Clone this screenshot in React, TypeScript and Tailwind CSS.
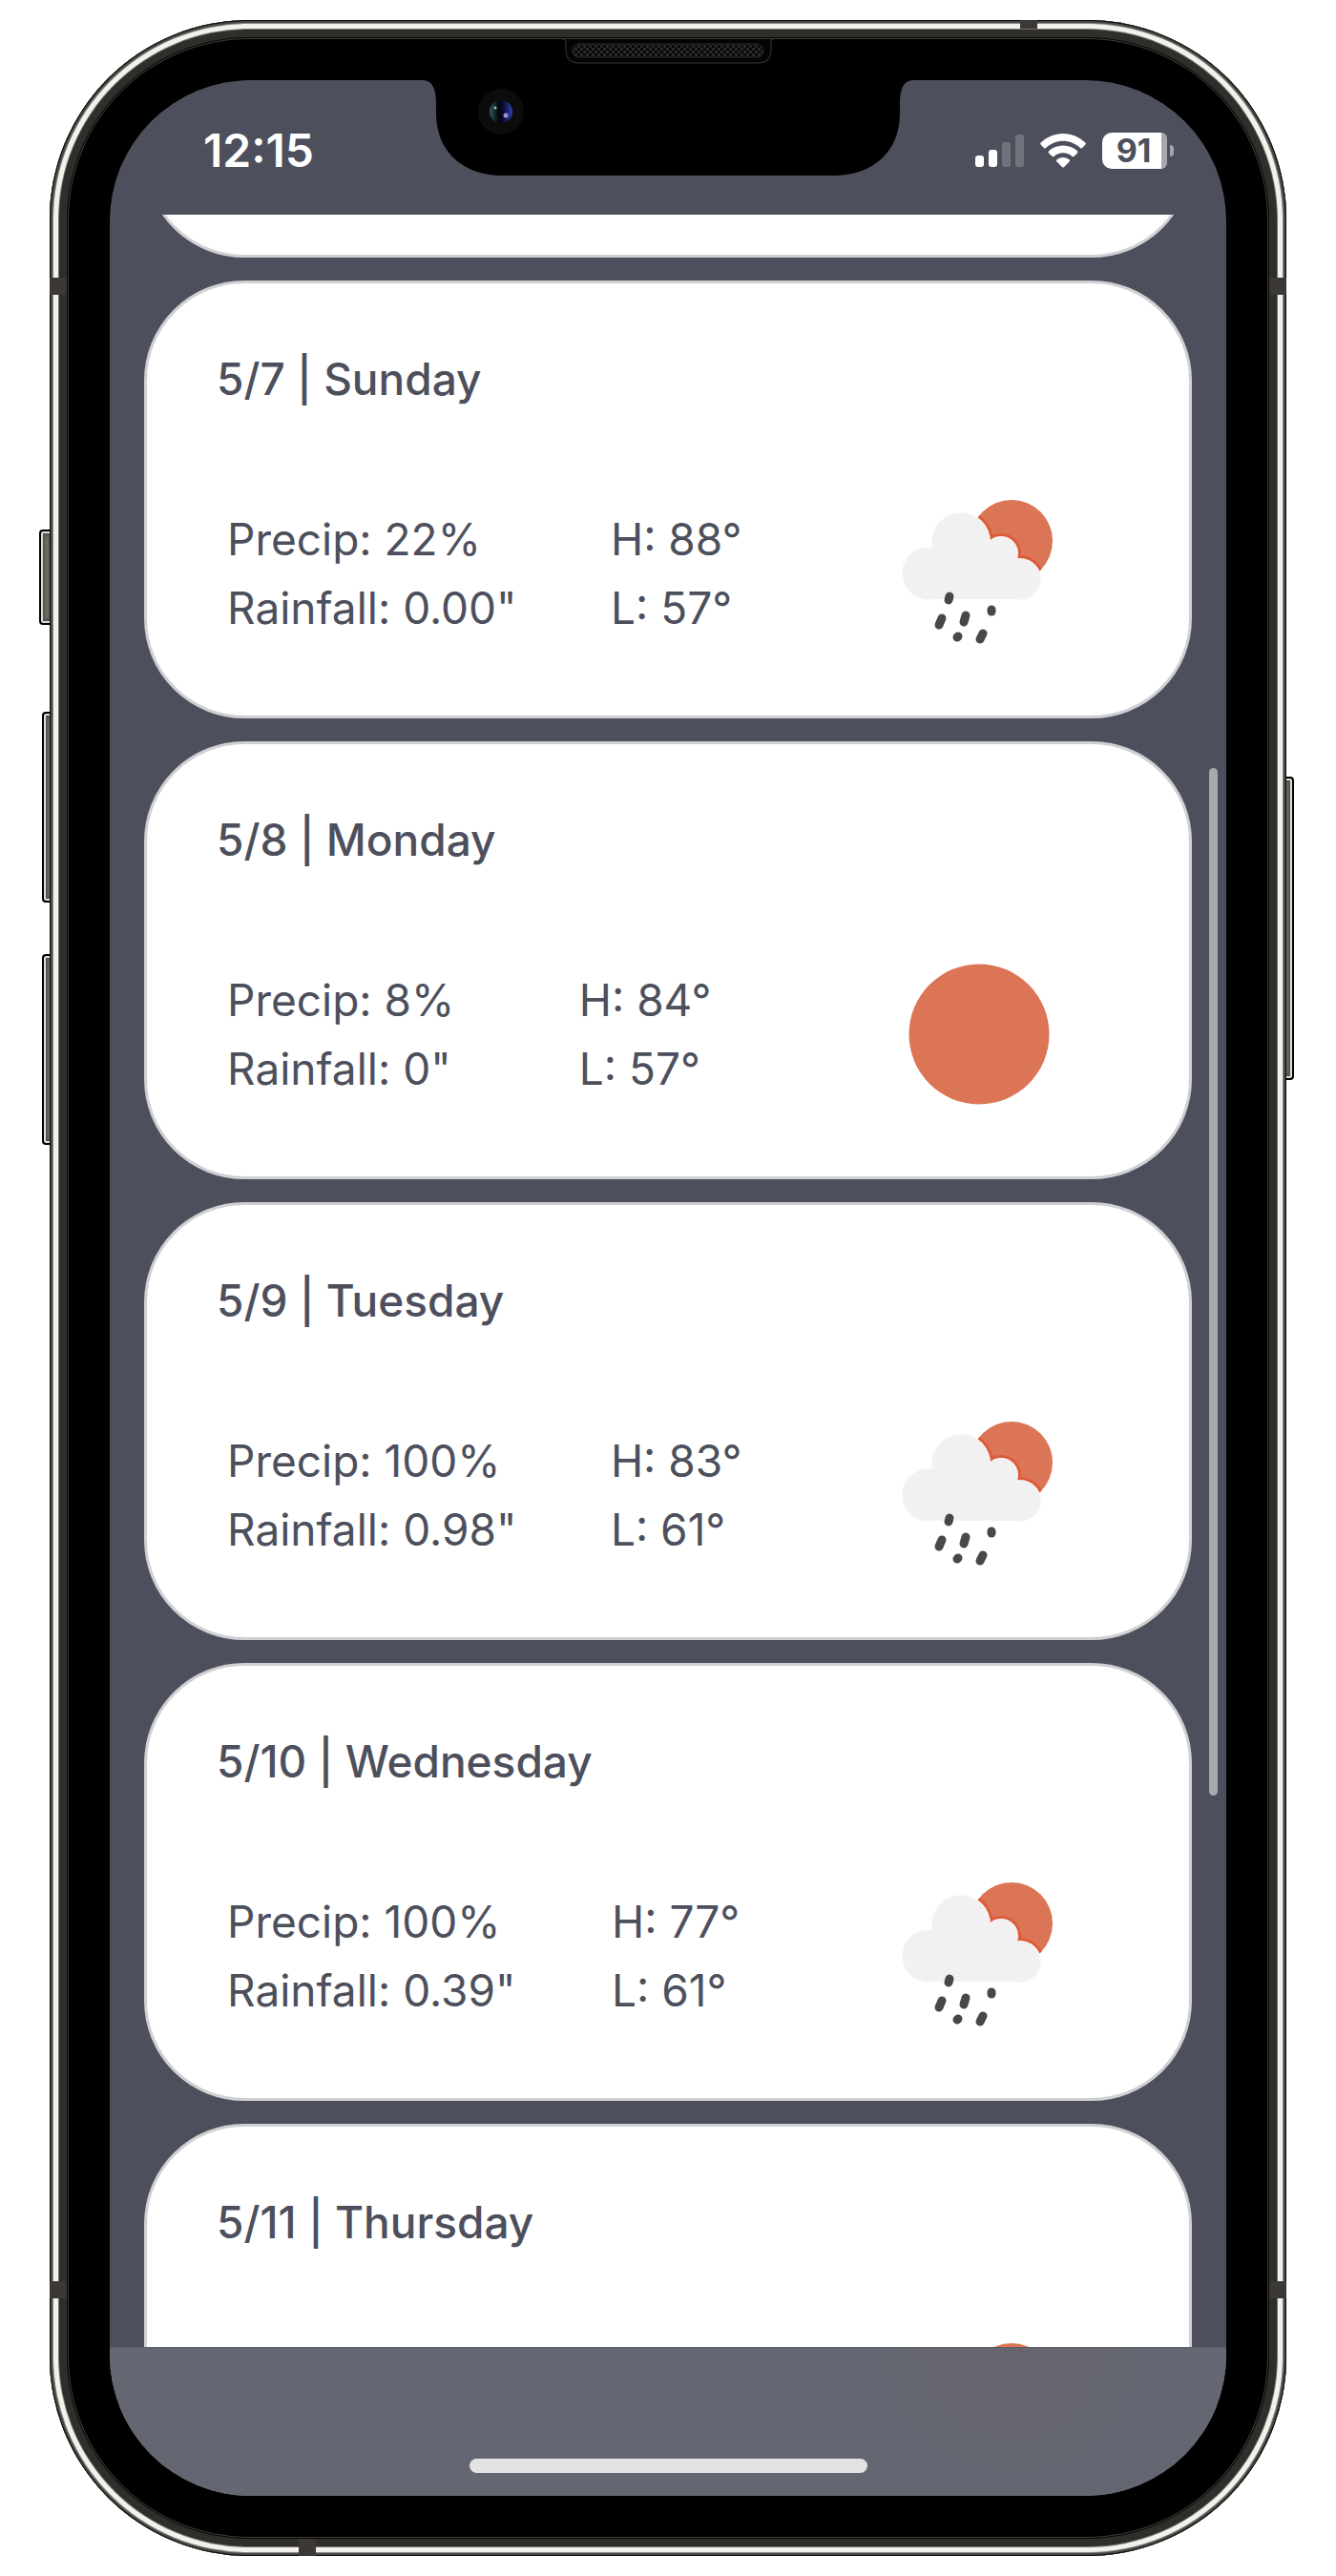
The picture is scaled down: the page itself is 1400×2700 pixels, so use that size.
import React from "react";

type Day = { title: string; precip: string; rain: string; high: string; low: string; icon: "rain" | "sun" };

const days: Day[] = [
  { title: "5/7 | Sunday", precip: "22%", rain: '0.00"', high: "88°", low: "57°", icon: "rain" },
  { title: "5/8 | Monday", precip: "8%", rain: '0"', high: "84°", low: "57°", icon: "sun" },
  { title: "5/9 | Tuesday", precip: "100%", rain: '0.98"', high: "83°", low: "61°", icon: "rain" },
  { title: "5/10 | Wednesday", precip: "100%", rain: '0.39"', high: "77°", low: "61°", icon: "rain" },
];

const lobes = [
  { cx: 97, cy: 150, r: 27 },
  { cx: 131, cy: 117, r: 30 },
  { cx: 173, cy: 129, r: 17 },
  { cx: 193, cy: 156, r: 21 },
];

const drops: [number, number, number, number][] = [
  [119, 174, 118, 178],
  [111, 197, 108, 204],
  [136, 194, 134, 201],
  [163, 188, 163, 190],
  [128, 216, 127, 217],
  [154, 213, 151, 219],
];

function RainIcon() {
  return (
    <svg viewBox="0 0 300 300" className="size-[300px] shrink-0" role="img" aria-label="Rain">
      <defs>
        <clipPath id="sunDisc">
          <circle cx="184" cy="116" r="43" />
        </clipPath>
      </defs>
      <circle cx="184" cy="116" r="43" fill="#dc7555" />
      <g clipPath="url(#sunDisc)">
        {lobes.map((l) => (
          <circle key={l.cx} {...l} r={l.r + 4} fill="#db5c3b" />
        ))}
      </g>
      {lobes.map((l) => (
        <circle key={l.cx} {...l} r={l.r + 1} fill="#fbf6f4" />
      ))}
      <g fill="#f1f1f1">
        {lobes.map((l) => (
          <circle key={l.cx} {...l} />
        ))}
        <path d="M97 177 V130 L120 122 L160 122 L193 140 V177 Z" />
      </g>
      {drops.map(([x1, y1, x2, y2]) => (
        <line key={x1} x1={x1} y1={y1} x2={x2} y2={y2} stroke="#48484a" strokeWidth="9" strokeLinecap="round" />
      ))}
    </svg>
  );
}

function SunIcon() {
  return (
    <svg viewBox="0 0 300 300" className="size-[300px] shrink-0" role="img" aria-label="Sunny">
      <circle cx="150" cy="150" r="73.500" fill="#dc7555" />
    </svg>
  );
}

const cardShape = "h-[459px] shrink-0 rounded-[105px] border-[3px] border-[#cfd0d3] bg-white";
const cardText = "text-[46px]/[72px]";

function DayCard({ day }: { day: Day }) {
  return (
    <article className={`${cardShape} pt-16 pr-[70px]`}>
      <h2 className={`${cardText} pl-[73px] font-medium`}>{day.title}</h2>
      <div className="mt-[18px] flex items-center justify-between pl-[84px]">
        <div className={cardText}>
          <p>Precip: {day.precip}</p>
          <p>Rainfall: {day.rain}</p>
        </div>
        <div className={cardText}>
          <p>H: {day.high}</p>
          <p>L: {day.low}</p>
        </div>
        {day.icon === "sun" ? <SunIcon /> : <RainIcon />}
      </div>
    </article>
  );
}

function Notch() {
  return (
    <svg viewBox="0 0 520 150" className="absolute top-[38px] left-1/2 h-[150px] w-[520px] -translate-x-1/2" aria-hidden="true">
      <defs>
        <pattern id="mesh" width="6" height="6" patternUnits="userSpaceOnUse">
          <rect width="6" height="6" fill="#0b0b0b" />
          <circle cx="1.5" cy="1.5" r="1.3" fill="#3a3a3a" />
          <circle cx="4.5" cy="4.5" r="1.3" fill="#3a3a3a" />
        </pattern>
        <linearGradient id="lens">
          <stop offset="0" stopColor="#2d5c58" />
          <stop offset="0.4" stopColor="#05060c" />
          <stop offset="0.6" stopColor="#0a0c30" />
          <stop offset="1" stopColor="#3340b8" />
        </linearGradient>
      </defs>
      <path d="M2 24 V46 C14 46 17 56 17 72 C17 84 17 90 19 98 C25 126 50 146 86 146 H434 C470 146 495 126 501 98 C503 90 503 84 503 72 C503 56 506 46 518 46 V24 Z" fill="#000" />
      <path d="M150 3 Q153 3 153 6 V14 Q153 28 167 28 H354 Q368 28 368 14 V6 Q368 3 371 3" fill="#040404" stroke="#262626" strokeWidth="1.500" />
      <rect x="160" y="8" width="200" height="14" rx="7" fill="url(#mesh)" stroke="#2c2c2c" strokeWidth="1" />
      <circle cx="85" cy="79" r="24" fill="#0c0c0c" />
      <circle cx="85" cy="79" r="12" fill="url(#lens)" />
      <circle cx="90" cy="83" r="2.500" fill="#9a93d8" />
      <circle cx="79" cy="75" r="1.500" fill="#8fc0b4" />
    </svg>
  );
}

function Signal() {
  return (
    <svg viewBox="0 0 51 34" className="h-[34px] w-[51px]" fill="#fff" role="img" aria-label="Signal">
      <rect x="0" y="22" width="9" height="12" rx="3" />
      <rect x="14" y="16" width="9" height="18" rx="3" />
      <rect x="28" y="8" width="9" height="26" rx="3" opacity="0.2" />
      <rect x="42" y="0" width="9" height="34" rx="3" opacity="0.2" />
    </svg>
  );
}

function Wifi() {
  return (
    <svg viewBox="0 0 48 36" className="h-9 w-12" fill="#fff" role="img" aria-label="Wi-Fi">
      <path d="M24 0 C33 0 41 3.600 47.300 9.500 Q48.300 10.600 47.300 11.700 L43.800 15.200 Q43 15.900 42 15 C37 10.400 30.800 7.800 24 7.800 C17.200 7.800 11 10.400 6 15 Q5 15.900 4.200 15.200 L.7 11.700 Q-.3 10.600 .7 9.500 C7 3.600 15 0 24 0 Z" />
      <path d="M24 12.500 C29.700 12.500 34.900 14.600 39 18.300 Q40 19.300 39 20.400 L35.300 24 Q34.500 24.700 33.500 23.900 C30.900 21.600 27.600 20.300 24 20.300 C20.400 20.300 17.100 21.600 14.500 23.900 Q13.500 24.700 12.700 24 L9 20.400 Q8 19.300 9 18.300 C13.100 14.600 18.300 12.500 24 12.500 Z" />
      <path d="M24 25 C26.600 25 28.900 25.900 30.700 27.400 Q31.600 28.300 30.700 29.300 L24.900 35.200 Q24 36 23.100 35.200 L17.300 29.300 Q16.400 28.300 17.300 27.400 C19.100 25.900 21.400 25 24 25 Z" />
    </svg>
  );
}

function Battery() {
  return (
    <div className="flex items-center gap-[3px]">
      <div className="flex">
        <span className="w-[62px] rounded-l-[10px] bg-white pl-1 text-center text-[34px]/[38px] font-bold text-[#4d505c]">91</span>
        <span className="w-1.5 rounded-r-[8px] bg-[#a6a7ad]" />
      </div>
      <div className="h-3 w-1 rounded-r-full bg-[#a6a7ad]" />
    </div>
  );
}

const sideButton = "absolute border-2 border-black bg-[#85857f] shadow-[inset_0_0_0_2px_#dddcd6,inset_0_0_3px_5px_#55554f]";
const band = "absolute bg-[#3b3835]";

export default function App() {
  return (
    <main className="bg-white px-[52px] py-[21px] font-[Inter,sans-serif] text-[#4d505c]">
      <div className="relative">
        <div className={`${sideButton} top-[534px] -left-[11px] h-[100px] w-4 rounded-l-[4px]`} />
        <div className={`${sideButton} top-[725px] -left-2 h-[200px] w-4 rounded-l-[4px]`} />
        <div className={`${sideButton} top-[979px] -left-2 h-[200px] w-4 rounded-l-[4px]`} />
        <div className={`${sideButton} top-[793px] -right-2 h-[318px] w-4 rounded-r-[4px]`} />

        <div className="relative rounded-[209px] bg-black px-[63px] py-[63px] shadow-[inset_0_0_0_1px_#0c0c0b,inset_0_0_0_3px_#4a4945,inset_0_0_0_4px_#8a8883,inset_0_0_0_9px_#f3f1eb,inset_0_0_0_10px_#77756f,inset_0_0_0_18px_#2f2e2a,inset_0_0_0_19px_#050505,inset_0_0_0_20px_#3c3c3a]">
          <div className={`${band} top-[270px] left-0 h-[18px] w-[18px]`} />
          <div className={`${band} top-[270px] right-0 h-[18px] w-[18px]`} />
          <div className={`${band} bottom-[270px] left-0 h-[18px] w-[18px]`} />
          <div className={`${band} right-0 bottom-[270px] h-[18px] w-[18px]`} />
          <div className={`${band} top-0 right-[261px] h-[9px] w-[18px]`} />
          <div className={`${band} bottom-0 left-[261px] h-[18px] w-[18px]`} />

          <div className="overflow-hidden rounded-[148px] bg-[#4d505c]">
            <header className="flex h-[141px] items-center justify-between pt-1.5 pr-[55px] pl-[98px] text-white">
              <time className="text-5xl/[60px] font-semibold">12:15</time>
              <div className="flex items-center gap-[17px]">
                <Signal />
                <Wifi />
                <Battery />
              </div>
            </header>

            <section className="relative flex h-[2235px] flex-col gap-6 overflow-hidden px-9">
              <div className="flex h-[45px] shrink-0 flex-col justify-end overflow-hidden">
                <div className={cardShape} />
              </div>
              {days.map((day) => (
                <DayCard key={day.title} day={day} />
              ))}
              <article className={`${cardShape} pt-16 pr-[70px]`}>
                <h2 className={`${cardText} pl-[73px] font-medium`}>5/11 | Thursday</h2>
                <div className="mt-[18px] flex justify-end">
                  <RainIcon />
                </div>
              </article>
              <div className="absolute top-[580px] right-[9px] h-[1077px] w-[9px] rounded-full bg-[#a8a9ae]" />
            </section>

            <footer className="flex h-[156px] items-end justify-center border-t border-[#5b5d67] bg-[#646771] bg-[radial-gradient(circle_at_945px_0px,#68646d,#646771_130px)] pb-6">
              <div className="h-[15px] w-[417px] rounded-full bg-[#e3e3e3]" />
            </footer>
          </div>
        </div>
        <div className="absolute inset-x-0 top-[-21px]">
          <Notch />
        </div>
      </div>
    </main>
  );
}
